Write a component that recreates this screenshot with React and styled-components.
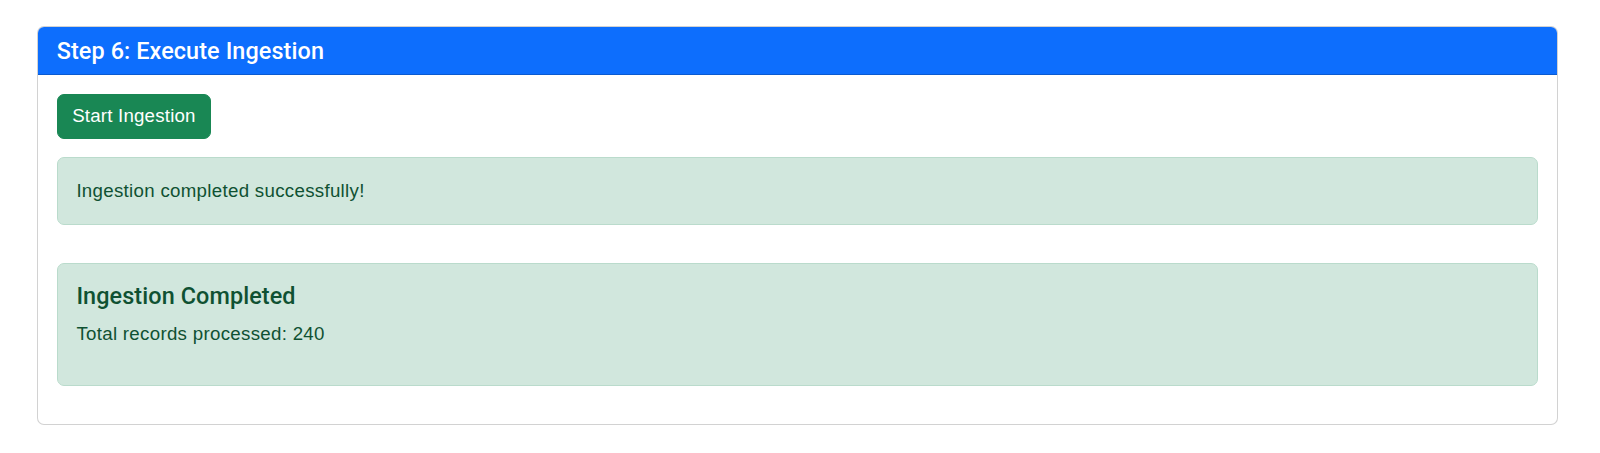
import React from 'react'
import styled, { createGlobalStyle } from 'styled-components'

const GlobalStyle = createGlobalStyle`
    html, body {
        margin: 0;
        padding: 0;
        background: #ffffff;
    }
    body {
        font-family: "Liberation Sans", Arial, sans-serif;
        font-size: 18.7px;
        line-height: 1.5;
        color: #212529;
    }
    * {
        box-sizing: border-box;
    }
`

const Page = styled.div`
    padding: 26px 42px 28px 37px;
`

const Card = styled.div`
    display: flex;
    flex-direction: column;
    border: 1px solid rgba(0, 0, 0, 0.175);
    border-radius: 7px;
    overflow: hidden;
    background: #fff;
`

const CardHeader = styled.div`
    padding: 9.5px 18.7px;
    background: #0d6efd;
    color: #fff;
    border-bottom: 1px solid rgba(0, 0, 0, 0.175);
`

const Title = styled.h5`
    margin: 0;
    font-family: Roboto, "Liberation Sans", Arial, sans-serif;
    font-size: 23.4px;
    font-weight: 500;
    line-height: 28px;
    letter-spacing: 0.1px;
`

const CardBody = styled.div`
    padding: 18.7px;
    display: flex;
    flex-direction: column;
    align-items: flex-start;
`

const Button = styled.button`
    font-family: "Liberation Sans", Arial, sans-serif;
    font-size: 18.7px;
    line-height: 28px;
    letter-spacing: 0.2px;
    padding: 7.5px 14.5px;
    color: #fff;
    background: #198754;
    border: 1px solid #198754;
    border-radius: 7px;
    cursor: pointer;
`

const Alert = styled.div`
    align-self: stretch;
    margin-top: ${(p) => p.$gap}px;
    margin-bottom: 18.7px;
    padding: 18.9px 18.7px;
    background: #d1e7dd;
    border: 1px solid #badbcc;
    border-radius: 7px;
    color: #0f5132;
    letter-spacing: 0.3px;
`

const AlertHeading = styled.h5`
    margin: 0 0 9.35px;
    font-family: Roboto, "Liberation Sans", Arial, sans-serif;
    font-size: 23.4px;
    font-weight: 500;
    line-height: 28px;
    letter-spacing: 0.1px;
    color: #0f5132;
`

const AlertText = styled.p`
    margin: 0 0 ${(p) => (p.$last ? 18.7 : 0)}px;
    line-height: 28px;
`

export default function App() {
    return (
        <>
            <GlobalStyle />
            <Page>
                <Card>
                    <CardHeader>
                        <Title>Step 6: Execute Ingestion</Title>
                    </CardHeader>
                    <CardBody>
                        <Button>Start Ingestion</Button>
                        <Alert $gap={18.7}>
                            <AlertText>Ingestion completed successfully!</AlertText>
                        </Alert>
                        <Alert $gap={18.7}>
                            <AlertHeading>Ingestion Completed</AlertHeading>
                            <AlertText $last>Total records processed: 240</AlertText>
                        </Alert>
                    </CardBody>
                </Card>
            </Page>
        </>
    )
}
